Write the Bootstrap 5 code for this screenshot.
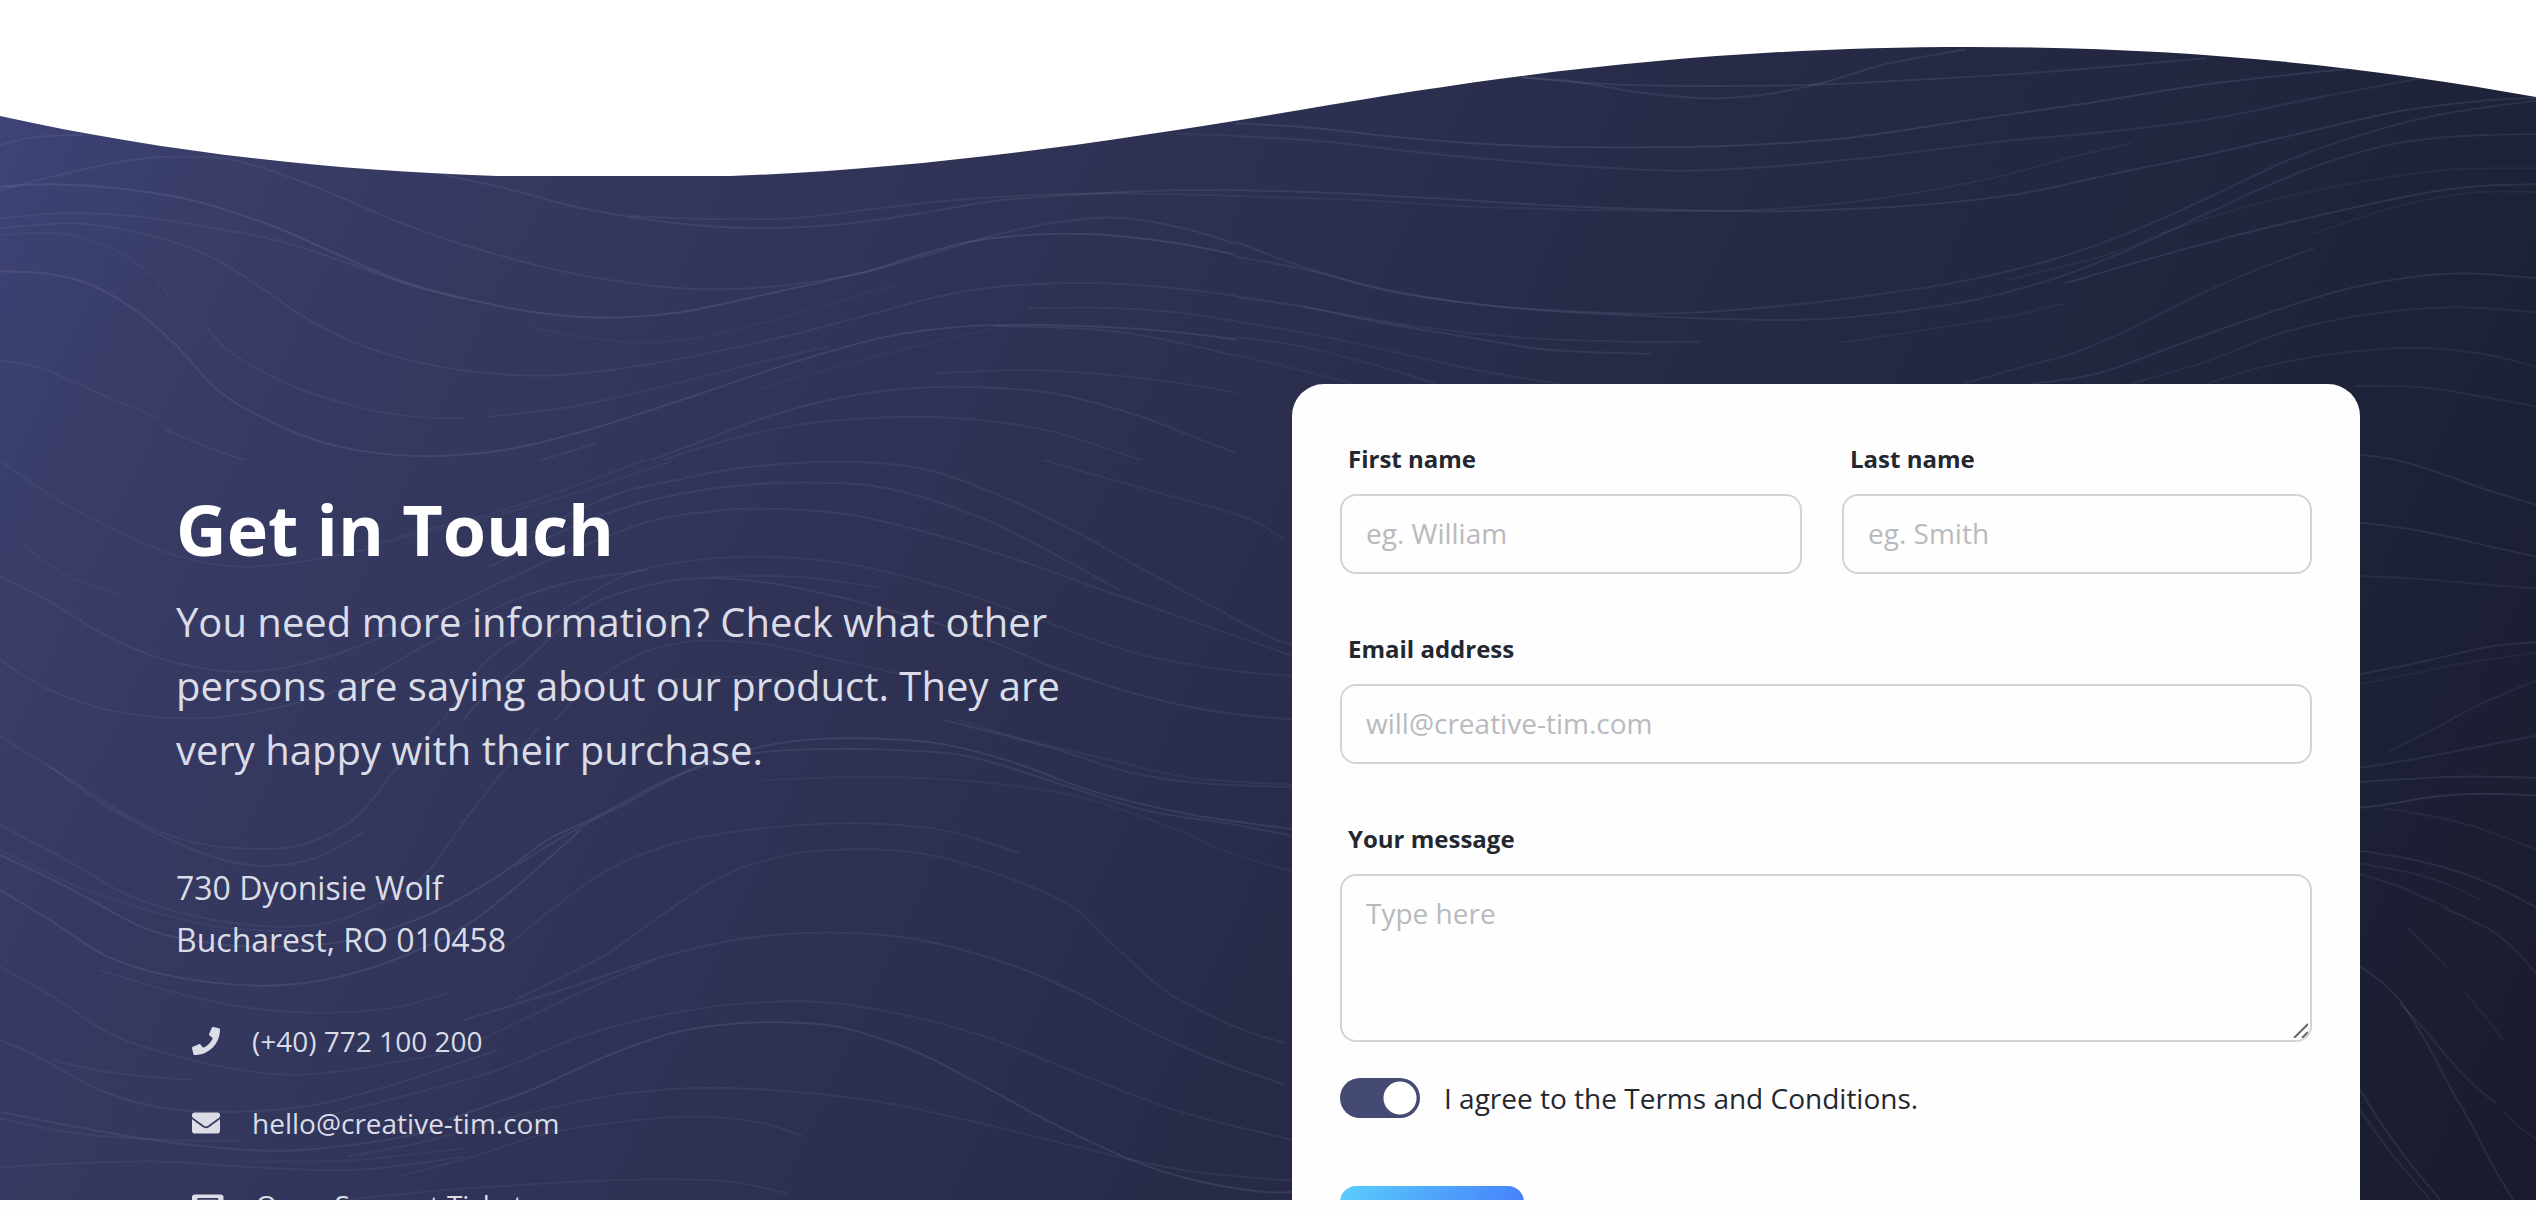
<!DOCTYPE html>
<html lang="en">
<head>
<meta charset="utf-8">
<meta name="viewport" content="width=device-width, initial-scale=1">
<title>Get in Touch</title>
<link href="https://cdn.jsdelivr.net/npm/bootstrap@5.3.0/dist/css/bootstrap.min.css" rel="stylesheet">
<style>
  html, body { height: 100%; }
  body { font-family: "Open Sans", sans-serif; background: #fefefe; color: #23272f; overflow: hidden; }
  .contact-section { height: calc(100vh - 12px); background: linear-gradient(295deg, #1a1a2c 0%, #1d2136 12%, #22263f 28%, #292c4a 48%, #2f3254 63%, #353960 81%, #393d68 91%, #40447a 100%); }
  .contour { inset: 0; width: 100%; height: 100%; fill: none; stroke: #8a92b4; stroke-width: 2; opacity: .85; }
  .crest { top: 0; left: 0; width: 100%; height: 176px; fill: #fff; }
  .page-width { max-width: 2280px; padding: 384px 48px 0; }
  .contact-columns { gap: 48px; }
  .contact-columns > * { flex: 0 0 calc(50% - 24px); min-width: 0; }
  .intro { padding-top: 100px; }
  .intro h2 { font-size: 70px; line-height: 90px; font-weight: 700; margin-bottom: 16px; }
  .intro-copy { font-size: 40px; line-height: 64px; margin-bottom: 80px; max-width: 920px; color: #dadce8; }
  .address { font-size: 32px; line-height: 52px; margin-bottom: 34px; color: #dadce8; }
  .reach-item { height: 82px; padding-left: 16px; gap: 32px; font-size: 28px; line-height: 42px; color: #dadce8; }
  .reach-item svg { height: 28px; fill: #dcdde6; flex: none; }
  .form-card { background: #fefefe; border-radius: 32px; padding: 56px 48px 64px; }
  .name-row { --bs-gutter-x: 48px; }
  .name-row > :last-child { padding-left: 16px; }
  .form-card .form-label { font-size: 24px; line-height: 38px; font-weight: 700; margin: 0 0 16px 8px; display: block; }
  .form-card .form-control { font-size: 28px; line-height: 44px; border: 2px solid #d2d4d6; border-radius: 16px; padding: 15px 24px 17px; background: #fefefe; height: 80px; }
  .form-card textarea.form-control { height: 168px; resize: none; }
  .form-card .form-control::placeholder { color: #b8babd; opacity: 1; }
  .grip { right: 4px; bottom: 4px; width: 18px; height: 18px; pointer-events: none; stroke: #666; stroke-width: 2; }
  .field-gap { margin-bottom: 56px; }
  .agree { margin: 35px 0 67px; gap: 24px; min-height: 0; padding: 0; font-size: 28px; line-height: 42px; }
  .agree .form-check-input { width: 80px; height: 40px; margin: 0; border: 0; border-radius: 40px; background-color: #454a73; background-size: 40px 40px; float: none;
    background-image: radial-gradient(circle closest-side, #fff 16px, transparent 17px); background-position: right center; background-repeat: no-repeat; }
  .agree a { color: inherit; text-decoration: none; }
  .btn-send { width: 184px; height: 80px; border: 0; border-radius: 16px; color: #fff; font-size: 24px; font-weight: 700; background: linear-gradient(310deg, #3f68fb, #5bd0fd); }
</style>
</head>
<body>
<section class="contact-section position-relative overflow-hidden">
  <svg class="contour position-absolute" viewBox="0 0 2536 1200" preserveAspectRatio="none" aria-hidden="true">
    <clipPath id="area-nw"><path d="M0 0H1236V460H0Z"/></clipPath>
    <clipPath id="area-w"><path d="M0 460H1300V720H0Z"/></clipPath>
    <clipPath id="area-sw"><path d="M0 720H1300V1200H0Z"/></clipPath>
    <clipPath id="area-ne"><path d="M1236 0H2536V384H1236Z"/></clipPath>
    <clipPath id="area-e"><path d="M2356 384H2536V908H2356Z"/></clipPath>
    <clipPath id="area-se"><path d="M2356 908H2536V1200H2356Z"/></clipPath>
  </svg>
  <svg class="crest position-absolute" viewBox="0 0 2536 176" preserveAspectRatio="none" aria-hidden="true">
    <path d="M0 0V116C200 160 400 178 620 178C860 178 1060 150 1300 110C1540 68 1740 47 1970 47C2180 47 2360 65 2536 97V0Z"/>
  </svg>
  <div class="page-width container-fluid position-relative">
    <div class="contact-columns d-flex align-items-start">
      <div class="intro">
        <h2 class="text-white">Get in Touch</h2>
        <p class="intro-copy">You need more information? Check what other persons are saying about our product. They are very happy with their purchase.</p>
        <address class="address">730 Dyonisie Wolf<br>Bucharest, RO 010458</address>
        <div class="reach-item d-flex align-items-center">
          <svg viewBox="0 0 512 512" aria-hidden="true"><path d="M493.4 24.6l-104-24c-11.3-2.6-22.9 3.3-27.5 13.9l-48 112c-4.2 9.8-1.4 21.3 6.9 28l60.6 49.6c-36 76.7-98.9 140.5-177.2 177.2l-49.6-60.6c-6.8-8.3-18.2-11.1-28-6.9l-112 48C3.9 366.5-2 378.1.6 389.4l24 104C27.1 504.2 36.7 512 48 512c256.1 0 464-207.5 464-464 0-11.2-7.7-20.9-18.6-23.4z"/></svg>
          <span>(+40) 772 100 200</span>
        </div>
        <div class="reach-item d-flex align-items-center">
          <svg viewBox="0 0 512 512" aria-hidden="true"><path d="M502.3 190.8c3.9-3.1 9.7-.2 9.7 4.7V400c0 26.5-21.5 48-48 48H48c-26.5 0-48-21.5-48-48V195.6c0-5 5.7-7.8 9.7-4.7 22.4 17.4 52.1 39.5 154.1 113.6 21.1 15.4 56.7 47.8 92.2 47.6 35.7.3 72-32.8 92.3-47.6 102-74.1 131.6-96.3 154-113.7zM256 320c23.2.4 56.6-29.2 73.4-41.4 132.7-96.3 142.8-104.7 173.4-128.7 5.8-4.5 9.2-11.5 9.2-18.9v-19c0-26.5-21.5-48-48-48H48c-26.5 0-48 21.5-48 48v19c0 7.4 3.4 14.3 9.2 18.9 30.6 23.9 40.7 32.4 173.4 128.7 16.8 12.2 50.2 41.8 73.4 41.4z"/></svg>
          <span>hello@creative-tim.com</span>
        </div>
        <div class="reach-item d-flex align-items-center">
          <svg viewBox="0 0 576 512" aria-hidden="true"><path d="M128 160h320v192H128V160zm400 96c0 26.51 21.49 48 48 48v96c0 26.51-21.49 48-48 48H48c-26.51 0-48-21.49-48-48v-96c26.51 0 48-21.49 48-48s-21.49-48-48-48v-96c0-26.51 21.49-48 48-48h480c26.51 0 48 21.49 48 48v96c-26.51 0-48 21.49-48 48zm-48-104c0-13.255-10.745-24-24-24H120c-13.255 0-24 10.745-24 24v208c0 13.255 10.745 24 24 24h336c13.255 0 24-10.745 24-24V152z"/></svg>
          <span>Open Support Ticket</span>
        </div>
      </div>
      <form class="form-card">
        <div class="row name-row field-gap">
          <div class="col-6">
            <label class="form-label" for="first">First name</label>
            <input class="form-control" id="first" type="text" placeholder="eg. William">
          </div>
          <div class="col-6">
            <label class="form-label" for="last">Last name</label>
            <input class="form-control" id="last" type="text" placeholder="eg. Smith">
          </div>
        </div>
        <div class="field-gap">
          <label class="form-label" for="email">Email address</label>
          <input class="form-control" id="email" type="email" placeholder="will@creative-tim.com">
        </div>
        <label class="form-label" for="message">Your message</label>
        <div class="position-relative">
          <textarea class="form-control" id="message" placeholder="Type here"></textarea>
          <svg class="grip position-absolute" viewBox="0 0 18 18" aria-hidden="true"><path d="M4 18L18 4M12 18L18 12"/></svg>
        </div>
        <div class="agree form-check form-switch d-flex align-items-center">
          <input class="form-check-input" type="checkbox" role="switch" id="terms" checked>
          <label class="form-check-label" for="terms">I agree to the <a href="#">Terms and Conditions</a>.</label>
        </div>
        <button class="btn-send btn" type="submit">Send</button>
      </form>
    </div>
  </div>
</section>
<script src="https://cdn.jsdelivr.net/npm/bootstrap@5.3.0/dist/js/bootstrap.bundle.min.js"></script>
<script>
  // Contour lines, grouped by region: clip area, origin, scale, then [opacity, "x,y x,y ..."] per line.
  const regions = [
    { id: "nw", x: 0, y: 0, sx: .829, sy: .3333, lines: [
      [.16, "0,435 40,412 100,404"],
      [.16, "0,570 80,520 160,480 230,470 290,485 380,560 480,665 560,735 680,815 790,858 870,868 960,852 1040,818 1120,765 1200,705 1280,665 1350,653 1410,675 1470,715 1568,808"],
      [.22, "0,560 60,553 140,565 230,600 320,670 400,755 480,840 560,895 640,935 730,953 820,937 920,885 1040,818 1100,772 1170,725 1240,705 1320,703 1420,730 1500,770 1568,812"],
      [.14, "0,655 80,640 170,650 270,690 340,725 420,790 500,860 560,898"],
      [.14, "0,685 90,670 170,700 250,765 310,855 370,955 440,1040 520,1095 600,1122 680,1124 790,1090 920,1025 1040,950 1140,885 1230,855 1330,850 1430,868 1568,915"],
      [.1, "0,705 70,700 130,740 180,820 205,890"],
      [.2, "0,814 60,822 110,855 160,925 210,1030 260,1165 310,1245 380,1320 450,1358 530,1368 620,1345 720,1282 840,1185 960,1085 1070,1010 1160,980 1260,975 1380,988 1480,1015 1568,1052"],
      [.12, "250,985 280,1060 350,1155 430,1220 500,1250 560,1255"],
      [.12, "590,1250 690,1220 800,1160 920,1085 1000,1040"],
      [.12, "0,1080 50,1105 110,1170 190,1255"],
      [.14, "200,1290 270,1360 340,1410 410,1435 520,1430 620,1400 720,1330"],
      [.15, "720,1440 840,1330 920,1255 1010,1195 1100,1165 1180,1162 1270,1180 1370,1245 1460,1330 1545,1412"],
      [.12, "1130,1120 1230,1110 1330,1123 1450,1160 1568,1218"],
      [.13, "740,1440 830,1355 950,1280 1070,1252 1170,1257 1270,1295 1385,1388"],
      [.12, "850,1440 940,1398 1040,1383 1130,1400 1210,1440"],
      [.13, "1240,925 1330,923 1430,940 1568,998"],
      [.14, "1200,978 1330,990 1440,1038 1568,1118"],
      [.17, "535,525 610,565 690,618 770,655 850,678 930,684 1020,672 1110,640 1210,600 1340,578 1440,570 1568,575"],
      [.14, "760,648 860,657 960,654 1060,625 1180,595 1340,580 1568,594"],
      [.12, "1420,402 1500,408 1568,428"],
      [.08, "640,980 700,1010 770,1028 850,1010 940,955 1080,855"],
      [.08, "910,1170 1010,1100 1120,1030 1200,985"]
    ] },
    { id: "ne", x: 1236, y: 0, sx: .829, sy: .3333, lines: [
      [.18, "345,232 420,248 490,256 560,258 700,254 830,238 980,215 1170,175"],
      [.18, "345,232 410,245 480,275 570,295 640,283 710,247 780,195 880,148"],
      [.2, "0,370 90,383 190,410 300,432 380,440 500,442 620,435 740,413 880,362 1020,312 1180,250 1340,207"],
      [.16, "0,408 110,425 230,460 340,485 460,505 540,512 660,497 780,468 920,425 1060,393 1180,355 1300,295 1430,235"],
      [.18, "0,570 110,578 240,595 370,615 500,628 640,634 760,625 870,605 960,575 1070,515 1170,465 1280,402 1400,335 1500,303 1568,294"],
      [.12, "0,588 150,600 290,620 480,632 620,630 720,612 820,578 920,530 1010,470 1080,430"],
      [.16, "0,725 80,800 180,868 300,915 430,937 530,940 640,922 760,888 880,842 990,775 1090,685 1180,585 1270,480 1370,395 1460,340 1568,302"],
      [.16, "0,770 90,812 190,877 330,923 470,945 600,958 700,958 800,935 900,895 1000,825 1090,735 1180,630 1290,510 1390,435 1480,408 1568,402"],
      [.1, "930,840 1050,765 1140,680 1250,600 1370,540 1470,508 1568,505"],
      [.18, "1000,850 1090,785 1200,710 1300,650 1410,590 1490,560 1568,553"],
      [.1, "1300,700 1400,620 1490,578 1568,576"],
      [.17, "0,890 80,920 180,970 300,1020 380,1050 500,1062"],
      [.13, "80,920 220,980 340,1012 470,1025 560,1025"],
      [.11, "730,1028 830,990 930,950 1000,910"],
      [.12, "0,965 90,1002 190,1055 290,1110 390,1152"],
      [.12, "0,1010 80,1040 160,1090 240,1150"],
      [.11, "0,1065 60,1100 140,1150"],
      [.14, "880,1150 950,1100 1010,1060 1080,985 1140,910 1220,820 1300,745"],
      [.17, "960,1152 1040,1120 1130,1040 1220,960 1320,880 1400,838 1480,820 1568,835"],
      [.12, "1080,1152 1170,1085 1260,1000 1360,945 1470,922 1568,937"],
      [.12, "1170,1152 1240,1100 1330,1060 1420,1043 1500,1060 1568,1100"]
    ] },
    { id: "e", x: 2356, y: 360, sx: .3333, sy: .3571, lines: [
      [.13, "0,73 200,76 380,103 540,130"],
      [.16, "12,265 120,280 225,308 380,360 540,405"],
      [.16, "12,455 160,473 300,500 400,522 540,550"],
      [.12, "12,605 200,614 400,630 540,640"],
      [.16, "12,880 150,855 260,832 400,803 540,790"],
      [.1, "12,908 160,880 330,848 540,820"],
      [.12, "100,1095 240,1030 370,965 540,898"],
      [.15, "12,1142 160,1120 290,1097 430,1072 540,1052"],
      [.17, "12,1182 160,1173 300,1167 420,1167 540,1170"],
      [.2, "12,1254 110,1242 200,1227 320,1216 440,1215 540,1220"],
      [.12, "80,1255 220,1276 360,1308 540,1370"],
      [.16, "12,1374 140,1393 260,1420 390,1462 540,1532"],
      [.12, "12,1410 160,1435 260,1463 370,1510"],
      [.12, "12,1440 130,1475 240,1520 350,1566"]
    ] },
    { id: "se", x: 2100, y: 900, sx: .3333, sy: .3333, lines: [
      [.15, "980,0 1080,45 1180,95 1250,155 1308,220"],
      [.17, "780,200 850,250 910,315 980,430 1050,560 1110,665 1180,800 1240,900"],
      [.15, "900,310 970,385 1050,480 1120,555 1190,610"],
      [.12, "1210,635 1250,675 1308,718"],
      [.17, "780,570 850,680 930,790 1020,898"],
      [.15, "780,630 870,755 940,840 990,898"],
      [.12, "920,80 980,140 1040,200"],
      [.1, "1090,270 1160,355 1210,420"]
    ] },
    { id: "w", x: 0, y: 440, sx: .829, sy: .3333, lines: [
      [.12, "0,60 60,165 130,260 210,345 290,380 370,362 460,320"],
      [.1, "20,300 80,405 150,468"],
      [.14, "0,410 60,485 130,590 200,660 280,695 350,680 420,630 500,550 610,420 700,320 790,240 860,214 920,206 1020,222 1130,285 1240,370 1330,450 1440,545 1568,655"],
      [.14, "0,660 60,750 140,815 240,835 330,805 430,730 510,620 610,490 690,425 780,390"],
      [.16, "540,900 580,780 640,650 700,515 760,450 840,415 930,430 1050,495 1180,590 1280,690 1390,775 1480,820 1568,840"],
      [.12, "520,900 580,680 640,570 700,480 760,400 840,360 930,350 1030,375 1150,450 1260,545 1370,640 1480,690 1568,710"],
      [.14, "640,280 740,165 820,118 900,82 1010,65 1110,85 1200,160 1290,265 1380,390 1470,510 1530,590 1568,620"],
      [.15, "590,380 700,250 800,172 890,137 980,128 1070,145 1180,230 1270,340 1350,450"],
      [.11, "480,290 600,215 680,150 800,40"],
      [.11, "440,320 560,250 680,170 810,65"],
      [.12, "650,900 700,760 760,655 830,605 920,612 1000,655 1100,710"],
      [.1, "800,720 900,710 990,730"],
      [.12, "860,410 960,410 1060,442"],
      [.12, "1180,0 1300,90 1400,160 1500,230 1550,300"]
    ] },
    { id: "sw", x: 0, y: 700, sx: .829, sy: .3333, lines: [
      [.13, "0,110 70,215 160,355 230,425 310,447 370,430 430,350 480,200 540,40"],
      [.14, "60,200 130,320 210,425 270,480 320,498 380,475 440,395"],
      [.13, "0,375 80,480 150,580 220,640 300,675 380,675 440,630 510,530 570,330 650,80"],
      [.1, "0,450 80,545 170,625 260,680 350,694"],
      [.2, "0,465 80,560 170,680 230,720 300,740 380,735 440,710 520,640 600,530 660,420 720,350 800,245 880,165 960,122 1040,115 1130,130 1220,185 1320,275 1440,345 1568,390"],
      [.17, "620,500 690,395 760,305 830,215 910,160 990,147 1080,150 1170,170 1270,245 1380,330 1480,370 1568,412"],
      [.2, "0,570 60,660 130,770 210,830 310,857 390,840 470,785 560,680 630,545 700,390"],
      [.12, "120,810 200,870 290,920 380,938 470,925 540,880"],
      [.12, "0,800 70,900 140,1010 240,1085 330,1122 400,1117 480,1085 560,1040 680,900 790,780"],
      [.13, "620,900 720,780 790,660 870,530 950,465 1030,448 1110,460 1200,520 1290,615 1350,750 1410,880 1490,980 1550,1030"],
      [.12, "610,740 670,620 740,500 830,420 940,380 1040,370 1140,392 1230,460"],
      [.15, "560,960 690,860 800,770 900,715 1010,698 1110,720 1220,795 1300,880 1380,985 1460,1075 1550,1155"],
      [.13, "390,1250 500,1180 600,1110 700,1010 800,945 900,910 1000,908 1100,950 1200,1020 1310,1130 1430,1240 1568,1325"],
      [.2, "540,1260 640,1170 730,1070 810,1000 880,972 940,967 1010,980 1100,1050 1180,1150 1270,1270 1370,1385 1440,1440 1520,1475 1568,1475"],
      [.13, "420,1370 520,1320 620,1250 730,1190 830,1165 930,1170 1060,1205 1200,1280 1340,1365 1440,1415 1568,1445"],
      [.12, "480,1430 570,1370 660,1300 760,1262 850,1250 920,1270 970,1310"],
      [.12, "420,1498 550,1468 700,1445 800,1438 880,1445 950,1480"],
      [.14, "0,1020 50,1075 120,1170 200,1225 290,1235 380,1215 480,1150 600,1050"],
      [.17, "0,1235 80,1275 170,1315 270,1345 350,1352 440,1330 530,1290"],
      [.12, "0,1255 90,1300 200,1320 290,1322"],
      [.13, "0,1402 90,1390 190,1385 330,1405 440,1408 560,1370"],
      [.1, "300,1385 430,1380 560,1345"],
      [.15, "1090,30 1170,80 1270,145 1360,215 1450,250 1568,262"],
      [.12, "1120,30 1230,115 1340,180 1440,235 1568,255"],
      [.1, "920,240 1050,230 1180,245 1300,290 1400,370 1480,455 1560,515"],
      [.12, "60,1080 140,1120 230,1140"]
    ] }
  ];
  const svg = document.querySelector(".contour");
  const make = name => document.createElementNS("http://www.w3.org/2000/svg", name);
  for (const r of regions) {
    const group = make("g");
    group.setAttribute("clip-path", `url(#area-${r.id})`);
    for (const [alpha, text] of r.lines) {
      const p = text.split(" ").map(s => { const [a, b] = s.split(",").map(Number); return [r.x + a * r.sx, r.y + b * r.sy]; });
      let d = `M${p[0]}`;
      for (let i = 0; i < p.length - 1; i++) {
        const a = p[Math.max(i - 1, 0)], b = p[i], c = p[i + 1], e = p[Math.min(i + 2, p.length - 1)];
        d += `C${b[0] + (c[0] - a[0]) / 6} ${b[1] + (c[1] - a[1]) / 6} ${c[0] - (e[0] - b[0]) / 6} ${c[1] - (e[1] - b[1]) / 6} ${c}`;
      }
      const path = make("path");
      path.setAttribute("d", d);
      path.setAttribute("stroke-opacity", alpha);
      group.append(path);
    }
    svg.append(group);
  }
</script>
</body>
</html>
